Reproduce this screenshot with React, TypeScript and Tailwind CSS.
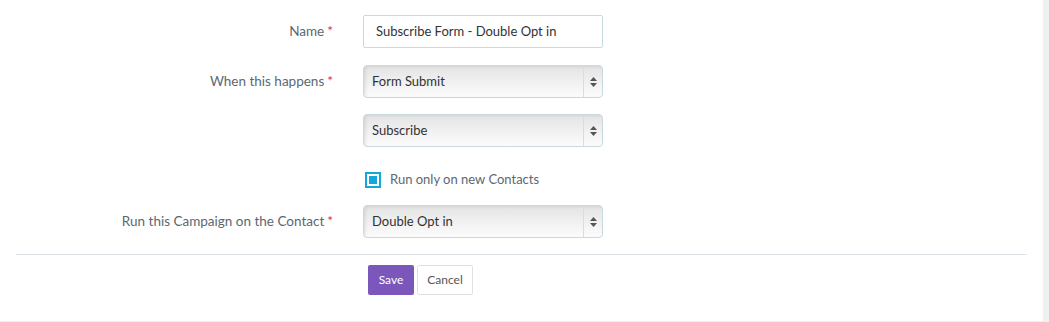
import { ReactNode } from "react";

const font = { fontFamily: "Lato, 'Open Sans', sans-serif" };

function Label({ children, required }: { children: ReactNode; required?: boolean }) {
  return (
    <div className="w-[317px] text-right text-[13.5px] text-[#5c6870]">
      {children}
      {required && <span className="ml-[3px] text-[#e0312c]">*</span>}
    </div>
  );
}

function Select({ value }: { value: string }) {
  return (
    <div className="flex h-[33px] w-[240px] items-stretch rounded-[4px] border border-[#c9dadf] bg-gradient-to-b from-[#e4e4e4] via-[#f0f0f0] to-[#fcfcfc] shadow-[inset_2px_1px_3px_rgba(0,0,0,0.08)]">
      <div className="flex flex-1 items-center pl-[8px] text-[13px] text-[#333]">{value}</div>
      <div className="flex w-[19px] flex-col items-center justify-center gap-[2px] border-l border-[#d5dfe3]">
        <svg width="7" height="4" viewBox="0 0 7 4">
          <path d="M3.5 0 L7 4 L0 4 Z" fill="#555" />
        </svg>
        <svg width="7" height="4" viewBox="0 0 7 4">
          <path d="M0 0 L7 0 L3.5 4 Z" fill="#555" />
        </svg>
      </div>
    </div>
  );
}

export default function App() {
  return (
    <div className="flex h-[322px] w-[1049px] bg-[#eef1f2]" style={font}>
      <div className="h-[321px] w-[1043px] bg-white px-[16px]">
        <div className="flex flex-col pt-[15px]">
          <div className="flex items-center gap-[30px]">
            <Label required>Name</Label>
            <div className="flex h-[33px] w-[240px] items-center rounded-[2px] border border-[#c9dadf] pl-[12px] text-[13px] text-[#333]">
              Subscribe Form - Double Opt in
            </div>
          </div>

          <div className="mt-[17px] flex items-center gap-[30px]">
            <Label required>When this happens</Label>
            <Select value="Form Submit" />
          </div>

          <div className="mt-[16px] flex items-center gap-[30px]">
            <div className="w-[317px]" />
            <Select value="Subscribe" />
          </div>

          <div className="mt-[25px] flex h-[16px] items-center gap-[30px]">
            <div className="w-[317px]" />
            <div className="flex items-center gap-[9px] pl-[2px]">
              <div className="flex h-[16px] w-[16px] items-center justify-center border-2 border-[#12a8dc]">
                <div className="h-[8px] w-[8px] bg-[#12a8dc]" />
              </div>
              <span className="text-[13px] text-[#5c6870]">Run only on new Contacts</span>
            </div>
          </div>

          <div className="mt-[17px] flex items-center gap-[30px]">
            <Label required>Run this Campaign on the Contact</Label>
            <Select value="Double Opt in" />
          </div>

          <div className="mt-[16px] w-[1011px] border-t border-[#dde3e6]" />

          <div className="mt-[10px] flex gap-[3px] pl-[352px]">
            <button className="h-[30px] w-[46px] rounded-[2px] bg-[#7b57bb] text-[12px] text-white">
              Save
            </button>
            <button className="h-[30px] w-[56px] rounded-[2px] border border-[#dde3e6] bg-white text-[12px] text-[#555]">
              Cancel
            </button>
          </div>
        </div>
      </div>
    </div>
  );
}
